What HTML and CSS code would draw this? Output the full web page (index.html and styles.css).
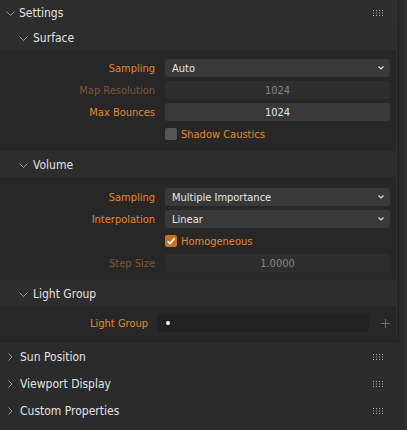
FILE: index.html
```html
<!DOCTYPE html>
<html>
<head>
<meta charset="utf-8">
<link rel="stylesheet" href="styles.css">
</head>
<body>
<div class="page">
  <div class="panel">
    <div class="hdr">
      <svg class="chev-d" viewBox="0 0 9 5"><path d="M0.5 0.5 L4.5 4.5 L8.5 0.5" /></svg>
      <span class="title">Settings</span>
      <svg class="grip" viewBox="0 0 11 7"><g><rect x="0" y="0" width="1" height="1"/><rect x="3" y="0" width="1" height="1"/><rect x="6" y="0" width="1" height="1"/><rect x="9" y="0" width="1" height="1"/><rect x="0" y="2.5" width="1" height="1"/><rect x="3" y="2.5" width="1" height="1"/><rect x="6" y="2.5" width="1" height="1"/><rect x="9" y="2.5" width="1" height="1"/><rect x="0" y="5" width="1" height="1"/><rect x="3" y="5" width="1" height="1"/><rect x="6" y="5" width="1" height="1"/><rect x="9" y="5" width="1" height="1"/></g></svg>
    </div>

    <div class="sub">
      <div class="subhdr">
        <svg class="chev-d" viewBox="0 0 9 5"><path d="M0.5 0.5 L4.5 4.5 L8.5 0.5" /></svg>
        <span>Surface</span>
      </div>
      <div class="subbody surface">
        <div class="row">
          <span class="lbl">Sampling</span>
          <div class="field menu"><span>Auto</span><svg class="drop" viewBox="0 0 6 4"><path d="M0.5 0.5 L3 3 L5.5 0.5"/></svg></div>
        </div>
        <div class="row">
          <span class="lbl dim">Map Resolution</span>
          <div class="field num disabled">1024</div>
        </div>
        <div class="row">
          <span class="lbl">Max Bounces</span>
          <div class="field num">1024</div>
        </div>
        <div class="row">
          <span></span>
          <div class="check"><span class="box"></span><span class="ctext">Shadow Caustics</span></div>
        </div>
      </div>
    </div>

    <div class="sub">
      <div class="subhdr">
        <svg class="chev-d" viewBox="0 0 9 5"><path d="M0.5 0.5 L4.5 4.5 L8.5 0.5" /></svg>
        <span>Volume</span>
      </div>
      <div class="subbody volume">
        <div class="row">
          <span class="lbl">Sampling</span>
          <div class="field menu"><span>Multiple Importance</span><svg class="drop" viewBox="0 0 6 4"><path d="M0.5 0.5 L3 3 L5.5 0.5"/></svg></div>
        </div>
        <div class="row">
          <span class="lbl">Interpolation</span>
          <div class="field menu"><span>Linear</span><svg class="drop" viewBox="0 0 6 4"><path d="M0.5 0.5 L3 3 L5.5 0.5"/></svg></div>
        </div>
        <div class="row">
          <span></span>
          <div class="check"><span class="box on"><svg viewBox="0 0 12 12"><path d="M2.6 6.2 L5 8.6 L9.6 3.4"/></svg></span><span class="ctext">Homogeneous</span></div>
        </div>
        <div class="row">
          <span class="lbl dim">Step Size</span>
          <div class="field num disabled">1.0000</div>
        </div>
      </div>
    </div>

    <div class="sub">
      <div class="subhdr">
        <svg class="chev-d" viewBox="0 0 9 5"><path d="M0.5 0.5 L4.5 4.5 L8.5 0.5" /></svg>
        <span>Light Group</span>
      </div>
      <div class="subbody lightgroup">
        <div class="lgrow">
          <span class="lbl">Light Group</span>
          <div class="search"><span class="dot"></span></div>
          <svg class="plus" viewBox="0 0 9 9"><path d="M4.5 0 V9 M0 4.5 H9"/></svg>
        </div>
      </div>
    </div>
  </div>

  <div class="closed">
    <div class="hdr">
      <svg class="chev-r" viewBox="0 0 5 8"><path d="M0.5 0.5 L4 4 L0.5 7.5"/></svg>
      <span class="title">Sun Position</span>
      <svg class="grip" viewBox="0 0 11 7"><g><rect x="0" y="0" width="1" height="1"/><rect x="3" y="0" width="1" height="1"/><rect x="6" y="0" width="1" height="1"/><rect x="9" y="0" width="1" height="1"/><rect x="0" y="2.5" width="1" height="1"/><rect x="3" y="2.5" width="1" height="1"/><rect x="6" y="2.5" width="1" height="1"/><rect x="9" y="2.5" width="1" height="1"/><rect x="0" y="5" width="1" height="1"/><rect x="3" y="5" width="1" height="1"/><rect x="6" y="5" width="1" height="1"/><rect x="9" y="5" width="1" height="1"/></g></svg>
    </div>
    <div class="hdr">
      <svg class="chev-r" viewBox="0 0 5 8"><path d="M0.5 0.5 L4 4 L0.5 7.5"/></svg>
      <span class="title">Viewport Display</span>
      <svg class="grip" viewBox="0 0 11 7"><g><rect x="0" y="0" width="1" height="1"/><rect x="3" y="0" width="1" height="1"/><rect x="6" y="0" width="1" height="1"/><rect x="9" y="0" width="1" height="1"/><rect x="0" y="2.5" width="1" height="1"/><rect x="3" y="2.5" width="1" height="1"/><rect x="6" y="2.5" width="1" height="1"/><rect x="9" y="2.5" width="1" height="1"/><rect x="0" y="5" width="1" height="1"/><rect x="3" y="5" width="1" height="1"/><rect x="6" y="5" width="1" height="1"/><rect x="9" y="5" width="1" height="1"/></g></svg>
    </div>
    <div class="hdr">
      <svg class="chev-r" viewBox="0 0 5 8"><path d="M0.5 0.5 L4 4 L0.5 7.5"/></svg>
      <span class="title">Custom Properties</span>
      <svg class="grip" viewBox="0 0 11 7"><g><rect x="0" y="0" width="1" height="1"/><rect x="3" y="0" width="1" height="1"/><rect x="6" y="0" width="1" height="1"/><rect x="9" y="0" width="1" height="1"/><rect x="0" y="2.5" width="1" height="1"/><rect x="3" y="2.5" width="1" height="1"/><rect x="6" y="2.5" width="1" height="1"/><rect x="9" y="2.5" width="1" height="1"/><rect x="0" y="5" width="1" height="1"/><rect x="3" y="5" width="1" height="1"/><rect x="6" y="5" width="1" height="1"/><rect x="9" y="5" width="1" height="1"/></g></svg>
    </div>
  </div>
</div>
</body>
</html>
```

FILE: styles.css
```css
html, body {
  margin: 0;
  padding: 0;
  background: #2b2b2b;
}
body {
  width: 407px;
  height: 430px;
  overflow: hidden;
  font-family: "DejaVu Sans Condensed", "DejaVu Sans", sans-serif;
  color: #e2e2e2;
}
.page {
  width: 407px;
  height: 430px;
  box-sizing: border-box;
  border-right: 2px solid #333333;
}
.panel {
  width: 398px;
  background: #2c2c2c;
  border-bottom: 1px solid #222222;
  box-shadow: 1px 0 0 #212121;
}
.hdr {
  height: 26px;
  display: flex;
  align-items: center;
  padding: 0 14px 0 6px;
  font-size: 12px;
  color: #e2e2e2;
  background: #2d2d2d;
}
.hdr .title {
  flex: 1;
}
.chev-d {
  width: 9px;
  height: 5px;
  margin-right: 4px;
  fill: none;
  stroke: #a8a8a8;
  stroke-width: 0.9;
}
.chev-r {
  width: 5px;
  height: 8px;
  margin: 0 7px 0 2px;
  fill: none;
  stroke: #a8a8a8;
  stroke-width: 0.9;
}
.grip {
  width: 11px;
  height: 7px;
  fill: #b4b4b4;
}
.sub + .sub {
  margin-top: 2px;
}
.subhdr {
  height: 24px;
  display: flex;
  align-items: center;
  padding-left: 19px;
  font-size: 12px;
  background: #2d2d2d;
  margin-right: 2px;
}
.subhdr .chev-d {
  margin-right: 5px;
}
.subbody {
  background: #272727;
  display: flex;
  flex-direction: column;
  gap: 4px;
  margin-right: 2px;
}
.surface {
  padding: 9px 0 8px 0;
}
.volume {
  padding: 11px 0 8px 0;
}
.lightgroup {
  padding: 8px 0 9px 0;
}
.row {
  display: grid;
  grid-template-columns: 155px 225px;
  column-gap: 10px;
  height: 18px;
  align-items: center;
}
.lbl {
  text-align: right;
  font-size: 11px;
  color: #e5872f;
  white-space: nowrap;
}
.lbl.dim {
  color: #7c5836;
}
.field {
  height: 18px;
  border-radius: 3px;
  background: #393939;
  font-size: 11px;
  color: #e6e6e6;
  display: flex;
  align-items: center;
  box-sizing: border-box;
}
.field.menu {
  padding: 0 6px 0 7px;
  justify-content: space-between;
}
.field.num {
  justify-content: center;
}
.field.disabled {
  background: #2e2e2e;
  color: #858585;
}
.drop {
  width: 6px;
  height: 4px;
  fill: none;
  stroke: #e0e0e0;
  stroke-width: 1.2;
}
.check {
  display: flex;
  align-items: center;
  gap: 4px;
  font-size: 11px;
  color: #e5872f;
}
.box {
  width: 12px;
  height: 12px;
  border-radius: 2px;
  background: #545454;
  display: flex;
}
.box.on {
  background: #c5731f;
}
.box svg {
  width: 12px;
  height: 12px;
  fill: none;
  stroke: #ffffff;
  stroke-width: 1.6;
}
.lgrow {
  display: grid;
  grid-template-columns: 148px 212px 9px;
  column-gap: 9px;
  height: 18px;
  align-items: center;
}
.search {
  height: 18px;
  border-radius: 3px;
  background: #212121;
  display: flex;
  align-items: center;
  padding-left: 9px;
}
.dot {
  width: 4px;
  height: 4px;
  border-radius: 50%;
  background: #ffffff;
}
.plus {
  width: 9px;
  height: 9px;
  margin-left: 3px;
  fill: none;
  stroke: #6c6c6c;
  stroke-width: 1;
}
.closed {
  width: 398px;
  margin-top: 2px;
  display: flex;
  flex-direction: column;
  gap: 1px;
}
.closed .hdr {
  background: #2b2b2b;
  padding-left: 6px;
}
```
